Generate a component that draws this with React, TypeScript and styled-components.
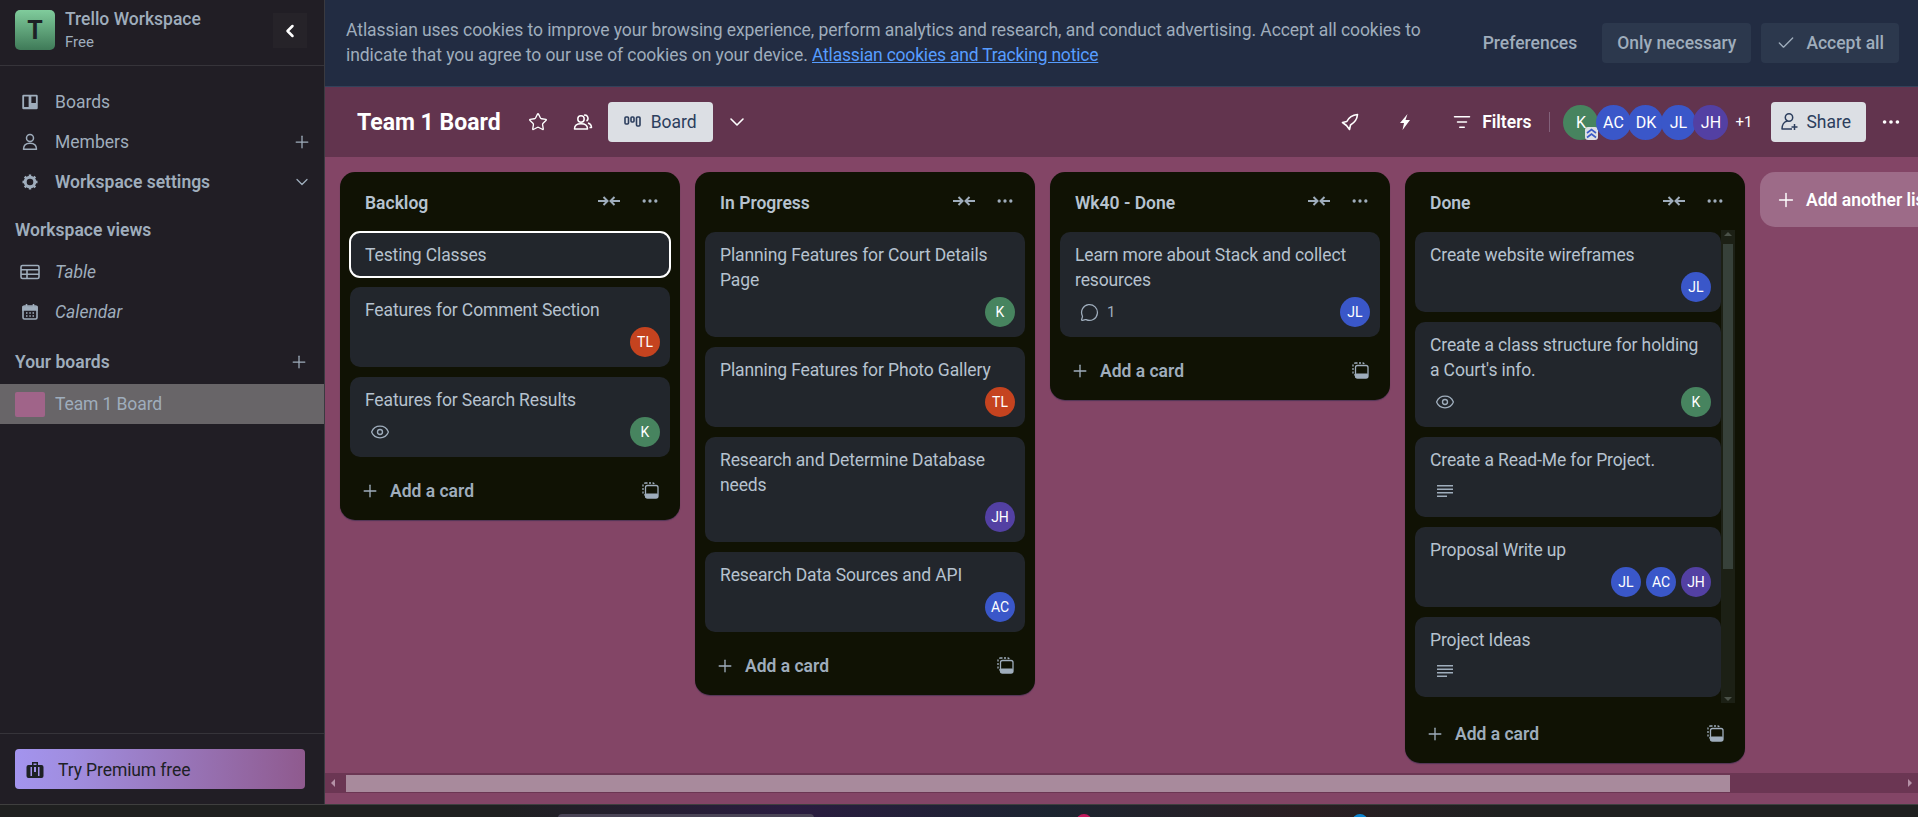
import React from 'react';
import styled, { createGlobalStyle } from 'styled-components';
import { Check, ChevronDown, ChevronLeft, Eye, ListFilter, MessageCircle, MoreHorizontal, Plus, Star } from 'lucide-react';

const Global = createGlobalStyle`
  html, body { margin: 0; padding: 0; height: 817px; overflow: hidden; background: #1e1e1e; }
  body { font-family: Roboto, "Noto Sans", sans-serif; font-size: 17.5px; }
`;

const Page = styled.div`
  width: 1918px;
  height: 817px;
  display: flex;
  flex-direction: column;
`;

const Main = styled.div`
  height: 804px;
  display: flex;
  flex: none;
`;

const Taskbar = styled.div`
  height: 13px;
  flex: none;
  position: relative;
  overflow: hidden;
  box-sizing: border-box;
  border-top: 1px solid #3f3f3f;
  background: linear-gradient(90deg, #1f2020 0, #1f2020 500px, #2a1c40 790px, #1c2430 1050px, #2a1e22 1300px, #1f2020 1500px);
`;

const TaskWindow = styled.div`
  position: absolute;
  left: 558px;
  top: 9px;
  width: 256px;
  height: 8px;
  border-radius: 4px 4px 0 0;
  background: #4a4456;
`;

const TaskDot = styled.div<{ $x: number; $color: string }>`
  position: absolute;
  left: ${p => p.$x}px;
  top: 9px;
  width: 16px;
  height: 16px;
  border-radius: 50%;
  background: ${p => p.$color};
`;

const Sidebar = styled.aside`
  width: 325px;
  flex: none;
  background: #211e25;
  display: flex;
  flex-direction: column;
  color: #9fadbc;
  border-right: 1px solid #3a3a40;
  box-sizing: border-box;
`;

const SideHead = styled.div`
  height: 66px;
  flex: none;
  box-sizing: border-box;
  padding: 10px 17px 0 15px;
  display: flex;
  gap: 10px;
  border-bottom: 1px solid #36343a;
`;

const Logo = styled.div`
  width: 40px;
  height: 40px;
  border-radius: 5px;
  background: linear-gradient(#80cc9c, #3f7a58);
  color: #1d2125;
  font-size: 25px;
  font-weight: 700;
  display: flex;
  align-items: center;
  justify-content: center;
`;

const WorkspaceName = styled.div`
  flex: 1;
  line-height: 23px;
  font-weight: 500;
  font-size: 17.5px;
  margin-top: -2px;
`;

const Plan = styled.div`
  font-size: 15px;
  font-weight: 400;
`;

const Collapse = styled.div`
  width: 34px;
  height: 35px;
  margin-top: 3px;
  background: #262329;
  color: #fff;
  display: flex;
  align-items: center;
  justify-content: center;
`;

const Nav = styled.div`
  padding-top: 16px;
  flex: 1;
`;

const NavRow = styled.div<{ $active?: boolean; $italic?: boolean }>`
  height: 40px;
  display: flex;
  align-items: center;
  padding: 0 12px 0 20px;
  gap: 15px;
  font-style: ${p => (p.$italic ? 'italic' : 'normal')};
  font-weight: ${p => (p.$active ? 600 : 400)};
  svg.lead { flex: none; width: 20px; height: 20px; }
  span { flex: 1; }
`;

const SectionRow = styled.div<{ $top: number }>`
  height: 40px;
  margin: ${p => p.$top}px 0 2px;
  display: flex;
  align-items: center;
  justify-content: space-between;
  padding: 0 15px 0 15px;
  font-weight: 600;
`;

const BoardRow = styled.div`
  height: 40px;
  background: #686568;
  display: flex;
  align-items: center;
  padding-left: 15px;
  gap: 10px;
  letter-spacing: -0.1px;
`;

const Swatch = styled.div`
  width: 30px;
  height: 25px;
  border-radius: 2px;
  background: #a06489;
`;

const SideFoot = styled.div`
  height: 71px;
  flex: none;
  box-sizing: border-box;
  border-top: 1px solid #36343a;
  padding: 15px 19px 0 15px;
`;

const Premium = styled.div`
  height: 40px;
  box-sizing: border-box;
  padding: 2px 0 0 10px;
  border-radius: 4px;
  background: linear-gradient(90deg, #a394ee 0%, #a08ddf 20%, #8f5a8e 100%);
  color: #1d2125;
  display: flex;
  align-items: center;
  gap: 13px;
  letter-spacing: -0.1px;
`;

const Content = styled.div`
  flex: 1;
  min-width: 0;
  display: flex;
  flex-direction: column;
  background: #834566;
`;

const Banner = styled.div`
  height: 87px;
  flex: none;
  box-sizing: border-box;
  background: #222c42;
  border-bottom: 1px solid #33415a;
  color: #9fadbc;
  display: flex;
  align-items: center;
  padding: 0 19px 0 21px;
`;

const BannerText = styled.div`
  width: 1090px;
  flex: none;
  line-height: 25px;
  letter-spacing: -0.06px;
`;

const BannerLink = styled.a`
  color: #579dff;
  text-decoration: underline;
  letter-spacing: -0.2px;
`;

const BannerActions = styled.div`
  flex: 1;
  display: flex;
  align-items: center;
  justify-content: flex-end;
  gap: 10px;
  font-weight: 500;
  white-space: nowrap;
`;

const BannerBtn = styled.div<{ $plain?: boolean }>`
  height: 40px;
  padding: 0 15px;
  border-radius: 4px;
  display: flex;
  align-items: center;
  gap: 10px;
  background: ${p => (p.$plain ? 'transparent' : '#2c384d')};
`;

const BoardBar = styled.div`
  height: 70px;
  flex: none;
  box-sizing: border-box;
  background: #62344e;
  display: flex;
  align-items: center;
  padding: 0 15px 0 32px;
  color: #fff;
`;

const BoardTitle = styled.h1`
  font-size: 23px;
  font-weight: 700;
  margin: 0 25px 0 0;
`;

const BarIcon = styled.div<{ $left?: number; $right?: number }>`
  width: 24px;
  height: 24px;
  display: flex;
  align-items: center;
  justify-content: center;
  margin: 0 ${p => p.$right ?? 0}px 0 ${p => p.$left ?? 0}px;
`;

const LightBtn = styled.div<{ $gap: number; $pad: string }>`
  height: 40px;
  box-sizing: border-box;
  border-radius: 4px;
  background: #dcdfe4;
  color: #2c3e5d;
  display: flex;
  align-items: center;
  gap: ${p => p.$gap}px;
  padding: ${p => p.$pad};
`;

const Spacer = styled.div`
  flex: 1;
`;

const FilterLabel = styled.span`
  font-weight: 600;
  margin-left: 11px;
`;

const Separator = styled.div`
  width: 1px;
  height: 20px;
  margin: 0 13px 0 18px;
  background: #82617a;
`;

const AvatarStack = styled.div`
  display: flex;
  align-items: center;
  margin-right: 7px;
  & > * + * { margin-left: -2.5px; }
`;

const Avatar = styled.div<{ $bg: string; $large?: boolean }>`
  position: relative;
  flex: none;
  width: ${p => (p.$large ? 35 : 30)}px;
  height: ${p => (p.$large ? 35 : 30)}px;
  border-radius: 50%;
  background: ${p => p.$bg};
  color: #fff;
  font-size: ${p => (p.$large ? 16 : 14)}px;
  font-weight: 400;
  display: flex;
  align-items: center;
  justify-content: center;
`;

const AdminBadge = styled.div`
  position: absolute;
  right: 0;
  bottom: 0;
  width: 13px;
  height: 13px;
  border-radius: 3px;
  background: #dcdfe4;
  color: #3a5bc7;
  display: flex;
  align-items: center;
  justify-content: center;
`;

const Count = styled.span`
  font-size: 15px;
  margin-right: 19px;
`;

const Board = styled.div`
  flex: 1;
  min-height: 0;
  position: relative;
  display: flex;
  align-items: flex-start;
  gap: 15px;
  padding: 15px 0 0 15px;
  overflow: hidden;
`;

const List = styled.section`
  width: 340px;
  flex: none;
  box-sizing: border-box;
  border-radius: 15px;
  background: #101204;
  color: #b6c2cf;
  box-shadow: 0 1px 1px rgba(9, 30, 66, 0.4);
  padding: 0 10px;
`;

const ListHead = styled.div`
  height: 60px;
  box-sizing: border-box;
  padding: 0 10px 3px 15px;
  display: flex;
  align-items: center;
  gap: 20px;
  font-weight: 600;
  span { flex: 1; margin-top: 4px; }
  svg { color: #9fadbc; }
`;

const Cards = styled.div<{ $scroll?: boolean }>`
  display: flex;
  flex-direction: column;
  gap: 10px;
  position: relative;
  padding-right: ${p => (p.$scroll ? '14px' : 0)};
  padding-bottom: ${p => (p.$scroll ? '6px' : 0)};
  margin-bottom: ${p => (p.$scroll ? '-3px' : 0)};
`;

const Card = styled.article<{ $focus?: boolean }>`
  box-sizing: border-box;
  border-radius: 10px;
  background: #22262c;
  color: #b6c2cf;
  padding: 11px 15px 9px;
  line-height: 25px;
  letter-spacing: -0.12px;
  outline: ${p => (p.$focus ? '2px solid #fff' : 'none')};
  outline-offset: -1px;
`;

const CardFoot = styled.div`
  height: 40px;
  margin: -1px -5px -4px 0;
  display: flex;
  align-items: center;
  justify-content: space-between;
  letter-spacing: normal;
`;

const Badges = styled.div`
  display: flex;
  align-items: center;
  gap: 8px;
  padding-left: 5px;
  font-size: 15px;
  color: #9fadbc;
`;

const Members = styled.div`
  display: flex;
  gap: 5px;
  margin-left: auto;
`;

const AddRow = styled.div`
  height: 63px;
  box-sizing: border-box;
  padding: 4px 11px 0 10px;
  display: flex;
  align-items: center;
  gap: 10px;
  color: #9fadbc;
  font-weight: 600;
  span { flex: 1; }
`;

const Track = styled.div`
  position: absolute;
  top: -2px;
  right: 0;
  bottom: 0;
  width: 14px;
  background: #1c2015;
`;

const Thumb = styled.div`
  position: absolute;
  top: 14px;
  left: 2px;
  right: 2px;
  height: 325px;
  background: #37413a;
`;

const Arrow = styled.div<{ $dir: 'up' | 'down' | 'left' | 'right' }>`
  position: absolute;
  width: 0;
  height: 0;
  border: 4px solid transparent;
  ${p => (p.$dir === 'up' ? 'top: 2px; left: 3px; border-bottom-color: #4a5148; border-top-width: 0;' : '')}
  ${p => (p.$dir === 'down' ? 'bottom: 2px; left: 3px; border-top-color: #4a5148; border-bottom-width: 0;' : '')}
  ${p => (p.$dir === 'left' ? 'top: 6px; left: 6px; border-right-color: #b592a7; border-left-width: 0;' : '')}
  ${p => (p.$dir === 'right' ? 'top: 6px; right: 6px; border-left-color: #b592a7; border-right-width: 0;' : '')}
`;

const AddList = styled.div`
  width: 340px;
  height: 55px;
  flex: none;
  box-sizing: border-box;
  border-radius: 15px;
  background: #9d6b88;
  color: #fff;
  font-weight: 600;
  display: flex;
  align-items: center;
  gap: 9px;
  padding-left: 15px;
`;

const HScroll = styled.div`
  position: absolute;
  left: 0;
  right: 0;
  bottom: 11px;
  height: 20px;
  background: #6b3653;
`;

const HThumb = styled.div`
  position: absolute;
  top: 2px;
  left: 21px;
  width: 1384px;
  height: 17px;
  background: #a88a9c;
`;

const TemplateIcon = () => (
  <svg width="17" height="17" viewBox="0 0 17 17" fill="none" stroke="currentColor" strokeWidth="1.3">
    <rect x="1" y="1" width="12" height="12" rx="2.5" strokeDasharray="2 1.5" />
    <rect x="3.5" y="3.5" width="12.5" height="12.5" rx="2" fill="#101204" />
    <rect x="3.5" y="11.5" width="12.5" height="4.5" rx="1" fill="currentColor" stroke="none" />
  </svg>
);

const CollapseIcon = () => (
  <svg width="22" height="12" viewBox="0 0 22 12" fill="none" stroke="currentColor" strokeWidth="2">
    <path d="M0 6h9M5.5 2l4 4-4 4M22 6h-9M16.5 2l-4 4 4 4" />
  </svg>
);

const BoardsIcon = () => (
  <svg className="lead" viewBox="-1 -1 22 22" fill="currentColor">
    <path fillRule="evenodd" d="M3 2h14a1.5 1.5 0 0 1 1.5 1.5v13a1.5 1.5 0 0 1-1.5 1.5H3a1.5 1.5 0 0 1-1.5-1.5v-13A1.5 1.5 0 0 1 3 2zm.5 2v11.5h5V4zm8 0v7h5V4z" />
  </svg>
);

const MemberIcon = () => (
  <svg className="lead" viewBox="0 0 20 20" fill="none" stroke="currentColor" strokeWidth="1.5">
    <circle cx="10" cy="6" r="3.5" />
    <path d="M3.5 17.2c0-4 2.8-6 6.5-6s6.500 2 6.500 6z" strokeLinejoin="round" />
  </svg>
);

const GearIcon = () => (
  <svg className="lead" viewBox="0 0 20 20" fill="none" stroke="currentColor">
    <circle cx="10" cy="10" r="4.8" strokeWidth="3" />
    <path d="M10 2.500v3M10 14.500v3M2.500 10h3M14.500 10h3M4.700 4.700l2 2M13.300 13.300l2 2M4.700 15.300l2-2M13.300 6.700l2-2" strokeWidth="2.4" />
  </svg>
);

const TableIcon = () => (
  <svg className="lead" viewBox="0 0 20 20" fill="none" stroke="currentColor" strokeWidth="1.6">
    <rect x="1" y="3.500" width="18" height="13" rx="1.500" />
    <path d="M1 7.800h18M1 12.200h18M7 7.800v8.700" />
  </svg>
);

const CalendarIcon = () => (
  <svg className="lead" viewBox="0 0 20 20" fill="none" stroke="currentColor" strokeWidth="1.600">
    <rect x="3" y="4" width="14" height="13" rx="1.500" />
    <path d="M3 5h14v3H3zM6.500 2v3M13.500 2v3" fill="currentColor" />
    <path d="M6 11h1.500M9.300 11h1.500M12.500 11h1.500M6 14h1.500M9.300 14h1.500M12.500 14h1.500" strokeWidth="1.400" />
  </svg>
);

const BoardGlyph = () => (
  <svg width="17" height="14" viewBox="0 0 17 14" fill="none" stroke="currentColor" strokeWidth="1.600">
    <rect x="1" y="2" width="3.500" height="7" rx="1" />
    <rect x="7" y="2" width="3" height="5" rx="1" />
    <rect x="12.500" y="2" width="3.500" height="9" rx="1" />
  </svg>
);

const PremiumIcon = () => (
  <svg width="20" height="20" viewBox="0 0 20 20" fill="currentColor">
    <path fillRule="evenodd" d="M7 2h6v3h3.500a2 2 0 0 1 2 2v9a2 2 0 0 1-2 2h-13a2 2 0 0 1-2-2V7a2 2 0 0 1 2-2H7zm1.500 1.500V5h3V3.500zM5.500 7v9H7V7zm7.500 0v9h1.500V7zM9 7v5h2V7z" />
  </svg>
);

const WorkspaceIcon = () => (
  <svg width="20" height="20" viewBox="0 0 20 20" fill="none" stroke="currentColor" strokeWidth="1.500" strokeLinejoin="round">
    <circle cx="8" cy="7" r="3.200" />
    <path d="M1.500 17c0-3.500 2.500-5.200 6.500-5.200s6.500 1.700 6.500 5.200z" />
    <path d="M11 3.200a3.200 3.200 0 0 1 2.500 5.800M15 11c2.200.8 3.500 2.200 3.500 4.500h-2" />
  </svg>
);

const RocketIcon = () => (
  <svg width="20" height="20" viewBox="0 0 20 20" fill="none" stroke="currentColor" strokeWidth="1.600" strokeLinejoin="round">
    <path d="M17.500 2.500C12 3 8.500 6 6.800 9.500L2.500 10.500l4 3 3 4 1-4.500C14 11 17 8 17.500 2.500z" />
  </svg>
);

const BoltIcon = () => (
  <svg width="16" height="18" viewBox="0 0 16 18" fill="currentColor">
    <path d="M10.500 1L3 10h4l-1.500 7L13 7H8.500z" />
  </svg>
);

const ShareIcon = () => (
  <svg width="20" height="20" viewBox="0 0 20 20" fill="none" stroke="currentColor" strokeWidth="1.500" strokeLinejoin="round">
    <circle cx="9" cy="5.500" r="3.700" />
    <path d="M12 17H2c0-4 2-7.500 5.500-8M14.500 12v6M11.500 15h6" />
  </svg>
);

const DescriptionIcon = () => (
  <svg width="20" height="20" viewBox="0 0 20 20" fill="currentColor">
    <path d="M2 3h16v1.500H2zM2 6.500h16V8H2zM2 10h16v1.500H2zM2 13.500h10V15H2z" />
  </svg>
);

const AdminIcon = () => (
  <svg width="11" height="11" viewBox="0 0 11 11" fill="none" stroke="currentColor" strokeWidth="1.600">
    <path d="M1 5l4.500-3.500L10 5M1 9.500L5.500 6 10 9.500" />
  </svg>
);

const AVATARS: Record<string, string> = {
  K: '#47845f',
  AC: '#3a57c9',
  DK: '#3a57c9',
  JL: '#3a57c9',
  JH: '#5340a3',
  TL: '#c5431f',
};

type CardData = {
  title: string;
  members?: string[];
  watch?: boolean;
  comments?: number;
  description?: boolean;
  focus?: boolean;
};

type ListData = { title: string; cards: CardData[]; scroll?: boolean };

const LISTS: ListData[] = [
  {
    title: 'Backlog',
    cards: [
      { title: 'Testing Classes', focus: true },
      { title: 'Features for Comment Section', members: ['TL'] },
      { title: 'Features for Search Results', members: ['K'], watch: true },
    ],
  },
  {
    title: 'In Progress',
    cards: [
      { title: 'Planning Features for Court Details Page', members: ['K'] },
      { title: 'Planning Features for Photo Gallery', members: ['TL'] },
      { title: 'Research and Determine Database needs', members: ['JH'] },
      { title: 'Research Data Sources and API', members: ['AC'] },
    ],
  },
  {
    title: 'Wk40 - Done',
    cards: [{ title: 'Learn more about Stack and collect resources', members: ['JL'], comments: 1 }],
  },
  {
    title: 'Done',
    scroll: true,
    cards: [
      { title: 'Create website wireframes', members: ['JL'] },
      { title: "Create a class structure for holding a Court's info.", members: ['K'], watch: true },
      { title: 'Create a Read-Me for Project.', description: true },
      { title: 'Proposal Write up', members: ['JL', 'AC', 'JH'] },
      { title: 'Project Ideas', description: true },
    ],
  },
];

const BoardCard = ({ card }: { card: CardData }) => {
  const hasFoot = card.members || card.watch || card.comments || card.description;
  return (
    <Card $focus={card.focus}>
      {card.title}
      {hasFoot && (
        <CardFoot>
          <Badges>
            {card.watch && <Eye size={20} strokeWidth={1.6} />}
            {card.description && <DescriptionIcon />}
            {card.comments && (
              <>
                <MessageCircle size={19} strokeWidth={1.6} />
                {card.comments}
              </>
            )}
          </Badges>
          {card.members && (
            <Members>
              {card.members.map(m => (
                <Avatar key={m} $bg={AVATARS[m]}>{m}</Avatar>
              ))}
            </Members>
          )}
        </CardFoot>
      )}
    </Card>
  );
};

const App = () => (
  <Page>
    <Global />
    <Main>
      <Sidebar>
        <SideHead>
          <Logo>T</Logo>
          <WorkspaceName>
            Trello Workspace
            <Plan>Free</Plan>
          </WorkspaceName>
          <Collapse><ChevronLeft size={20} strokeWidth={3} /></Collapse>
        </SideHead>
        <Nav>
          <NavRow><BoardsIcon /><span>Boards</span></NavRow>
          <NavRow><MemberIcon /><span>Members</span><Plus size={20} strokeWidth={1.5} /></NavRow>
          <NavRow $active><GearIcon /><span>Workspace settings</span><ChevronDown size={20} strokeWidth={1.5} /></NavRow>
          <SectionRow $top={8}>Workspace views</SectionRow>
          <NavRow $italic><TableIcon /><span>Table</span></NavRow>
          <NavRow $italic><CalendarIcon /><span>Calendar</span></NavRow>
          <SectionRow $top={10}>Your boards<Plus size={20} strokeWidth={1.5} /></SectionRow>
          <BoardRow><Swatch />Team 1 Board</BoardRow>
        </Nav>
        <SideFoot>
          <Premium><PremiumIcon />Try Premium free</Premium>
        </SideFoot>
      </Sidebar>
      <Content>
        <Banner>
          <BannerText>
            Atlassian uses cookies to improve your browsing experience, perform analytics and research, and conduct advertising. Accept all cookies to indicate that you agree to our use of cookies on your device. <BannerLink>Atlassian cookies and Tracking notice</BannerLink>
          </BannerText>
          <BannerActions>
            <BannerBtn $plain>Preferences</BannerBtn>
            <BannerBtn>Only necessary</BannerBtn>
            <BannerBtn><Check size={20} strokeWidth={1.6} />Accept all</BannerBtn>
          </BannerActions>
        </Banner>
        <BoardBar>
          <BoardTitle>Team 1 Board</BoardTitle>
          <BarIcon $right={21}><Star size={20} strokeWidth={1.6} /></BarIcon>
          <BarIcon $right={13}><WorkspaceIcon /></BarIcon>
          <LightBtn $gap={10} $pad="0 16px"><BoardGlyph />Board</LightBtn>
          <BarIcon $left={12}><ChevronDown size={24} strokeWidth={1.6} /></BarIcon>
          <Spacer />
          <BarIcon $right={31}><RocketIcon /></BarIcon>
          <BarIcon $right={36}><BoltIcon /></BarIcon>
          <ListFilter size={18} />
          <FilterLabel>Filters</FilterLabel>
          <Separator />
          <AvatarStack>
            <Avatar $bg={AVATARS.K} $large>
              K
              <AdminBadge><AdminIcon /></AdminBadge>
            </Avatar>
            <Avatar $bg={AVATARS.AC} $large>AC</Avatar>
            <Avatar $bg={AVATARS.DK} $large>DK</Avatar>
            <Avatar $bg={AVATARS.JL} $large>JL</Avatar>
            <Avatar $bg={AVATARS.JH} $large>JH</Avatar>
          </AvatarStack>
          <Count>+1</Count>
          <LightBtn $gap={6} $pad="0 15px 0 9px"><ShareIcon />Share</LightBtn>
          <BarIcon $left={13}><MoreHorizontal size={22} /></BarIcon>
        </BoardBar>
        <Board>
          {LISTS.map(list => (
            <List key={list.title}>
              <ListHead>
                <span>{list.title}</span>
                <CollapseIcon />
                <MoreHorizontal size={20} />
              </ListHead>
              <Cards $scroll={list.scroll}>
                {list.cards.map(card => <BoardCard key={card.title} card={card} />)}
                {list.scroll && (
                  <Track>
                    <Arrow $dir="up" />
                    <Thumb />
                    <Arrow $dir="down" />
                  </Track>
                )}
              </Cards>
              <AddRow>
                <Plus size={20} strokeWidth={1.6} />
                <span>Add a card</span>
                <TemplateIcon />
              </AddRow>
            </List>
          ))}
          <AddList><Plus size={22} strokeWidth={1.6} />Add another list</AddList>
          <HScroll>
            <Arrow $dir="left" />
            <HThumb />
            <Arrow $dir="right" />
          </HScroll>
        </Board>
      </Content>
    </Main>
    <Taskbar>
      <TaskWindow />
      <TaskDot $x={1076} $color="#c2185b" />
      <TaskDot $x={1352} $color="#0a84d0" />
    </Taskbar>
  </Page>
);

export default App;
